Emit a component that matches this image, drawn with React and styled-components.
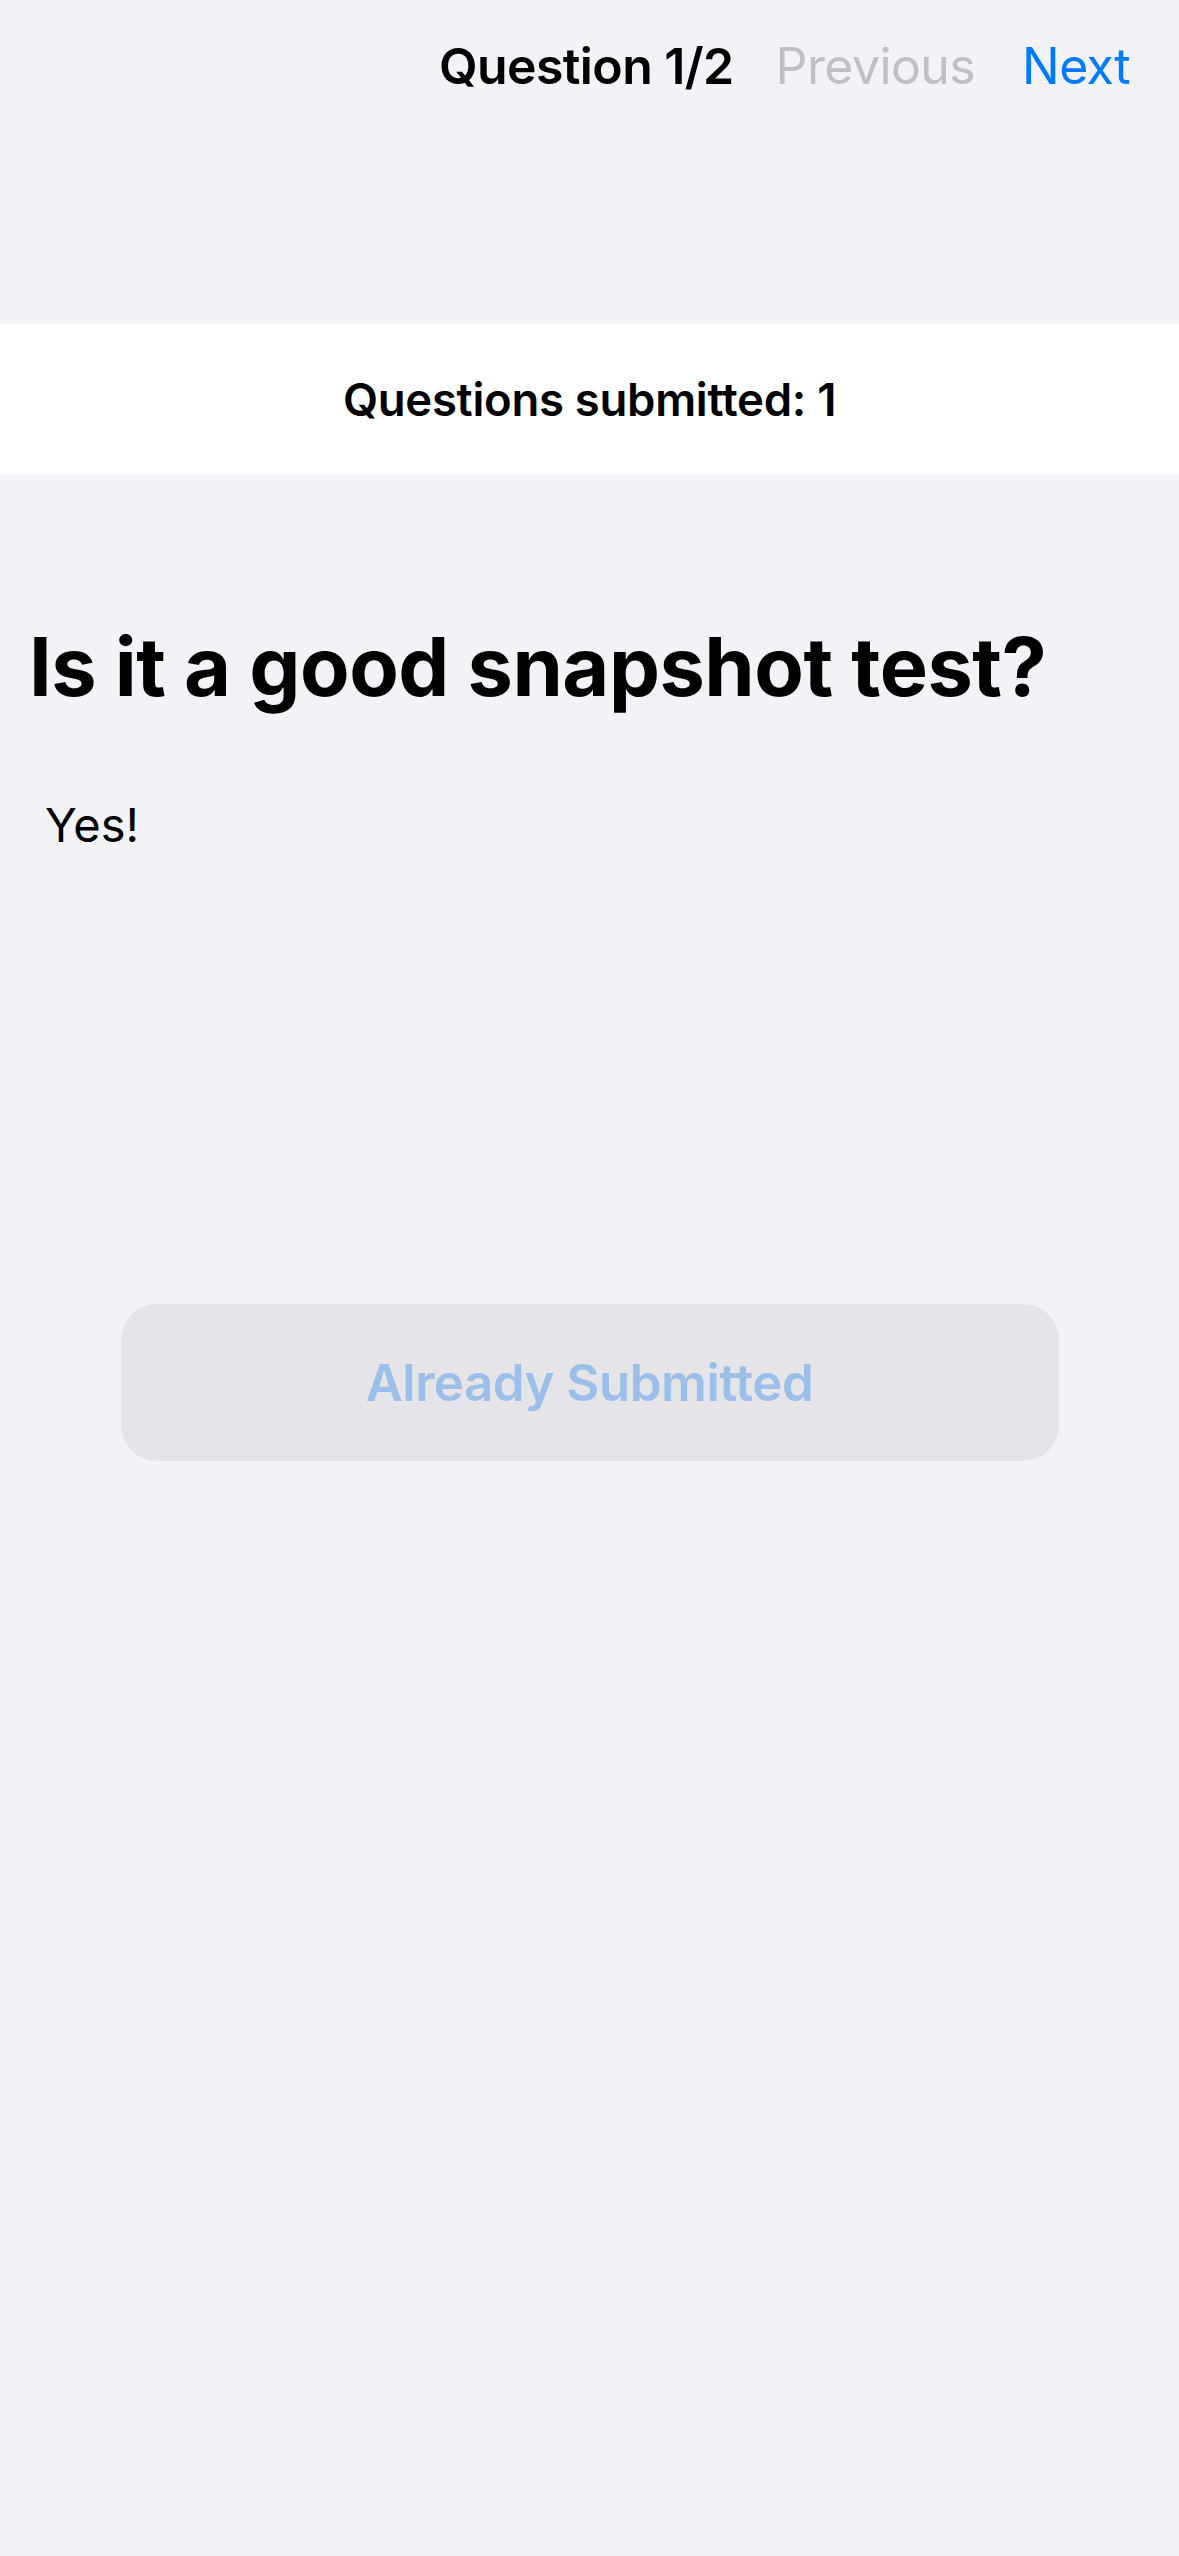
import React from 'react';
import styled, { createGlobalStyle } from 'styled-components';

const GlobalStyle = createGlobalStyle`
  html, body {
    margin: 0;
    padding: 0;
    background-color: #f2f2f7;
  }
  body {
    font-family: Inter, "Noto Sans", "Liberation Sans", sans-serif;
    color: #000;
  }
`;

const Screen = styled.div`
  width: 1179px;
  min-height: 2556px;
  background-color: #f2f2f7;
  display: flex;
  flex-direction: column;
`;

const NavBar = styled.div`
  display: flex;
  justify-content: flex-end;
  align-items: center;
  padding: 36px 49px 0 0;
  font-size: 50px;
  line-height: 61px;
  letter-spacing: -0.6px;
`;

const NavTitle = styled.span`
  font-weight: 600;
  color: #000;
  margin-right: 42px;
`;

const NavButton = styled.span`
  font-weight: 400;
  color: ${(p) => (p.disabled ? '#bfbfc4' : '#007aff')};
  margin-left: ${(p) => (p.gap ? `${p.gap}px` : '0')};
`;

const Banner = styled.div`
  margin-top: 227px;
  height: 150px;
  background-color: #fff;
  display: flex;
  align-items: center;
  justify-content: center;
  font-size: 45.5px;
  font-weight: 600;
  letter-spacing: -0.3px;
`;

const QuestionTitle = styled.h1`
  margin: 145px 0 0;
  padding-left: 29px;
  font-size: 81px;
  line-height: 96px;
  font-weight: 700;
  letter-spacing: -0.5px;
`;

const Answer = styled.p`
  margin: 82px 0 0;
  padding-left: 45px;
  font-size: 47px;
  line-height: 56px;
  font-weight: 400;
`;

const SubmitButton = styled.button`
  margin: 451px auto 0;
  width: 938px;
  height: 157px;
  border: none;
  border-radius: 36px;
  background-color: #e4e4e9;
  color: #9bbfe9;
  font-family: inherit;
  font-size: 51px;
  font-weight: 600;
  letter-spacing: -0.5px;
  display: flex;
  align-items: center;
  justify-content: center;
`;

export default function App() {
  return (
    <Screen>
      <GlobalStyle />
      <NavBar>
        <NavTitle>Question 1/2</NavTitle>
        <NavButton disabled>Previous</NavButton>
        <NavButton gap={47}>Next</NavButton>
      </NavBar>
      <Banner>Questions submitted: 1</Banner>
      <QuestionTitle>Is it a good snapshot test?</QuestionTitle>
      <Answer>Yes!</Answer>
      <SubmitButton disabled>Already Submitted</SubmitButton>
    </Screen>
  );
}
